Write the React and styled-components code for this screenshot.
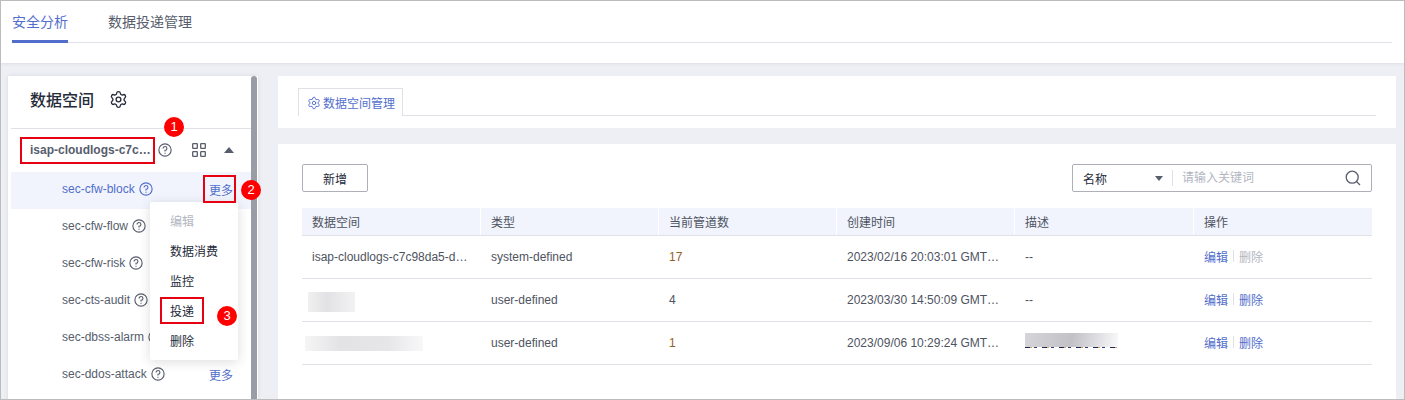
import React from "react";
import styled, { createGlobalStyle } from "styled-components";
import { Settings } from "lucide-react";

const FONT = `"Liberation Sans", "Noto Sans CJK SC", sans-serif`;
const BLUE = "#526ecc";
const TEXT = "#575d6c";

const GlobalStyle = createGlobalStyle`
  html, body { margin: 0; padding: 0; background: #eeeff4; }
  body { font-family: ${FONT}; font-size: 12px; color: ${TEXT}; }
  * { box-sizing: border-box; }
`;

const Page = styled.div`
  position: relative;
  width: 1405px;
  height: 400px;
  overflow: hidden;
  background: #eeeff4;
  border: 1px solid #bcbcbc;
`;

const TopBar = styled.div`
  height: 62px;
  background: #fff;
  padding: 0 12px 0 11px;
  box-shadow: 0 1px 3px rgba(37, 43, 58, 0.08);
`;

const TopTabs = styled.div`
  display: flex;
  height: 42px;
  gap: 40px;
  border-bottom: 1px solid #dfe1e6;
`;

const TopTab = styled.div`
  height: 42px;
  padding-top: 13px;
  line-height: 17px;
  font-size: 14px;
  color: ${(p) => (p.$active ? BLUE : TEXT)};
  border-bottom: 3px solid ${(p) => (p.$active ? BLUE : "transparent")};
`;

const Body = styled.div`
  display: flex;
  gap: 20px;
  padding: 13px 8px 0 7px;
`;

const Side = styled.aside`
  position: relative;
  flex: 0 0 250px;
  height: 330px;
  background: #fff;
  padding: 0 7px 0 3px;
  box-shadow: 0 0 4px rgba(37, 43, 58, 0.1);
`;

const ScrollThumb = styled.div`
  position: absolute;
  right: 1px;
  top: 0;
  width: 6px;
  height: 330px;
  border-radius: 3px 3px 0 0;
  background: #9a9ca6;
`;

const SideTitle = styled.div`
  display: flex;
  align-items: center;
  gap: 15px;
  height: 53px;
  padding: 0 0 6px 19px;
  border-bottom: 1px solid #dfe1e6;
  font-size: 16px;
  font-weight: 500;
  color: #252b3a;
`;

const Group = styled.div`
  display: flex;
  align-items: center;
  height: 43px;
  padding: 0 0 2px 19px;
  font-weight: 700;
  color: ${TEXT};
`;

const GroupName = styled.span`
  width: 125px;
  white-space: nowrap;
`;

const GroupIcons = styled.span`
  display: flex;
  align-items: center;
  color: ${TEXT};
  margin-left: 3px;
`;

const SubRow = styled.div`
  display: flex;
  align-items: center;
  height: 37px;
  padding: 0 0 3px 51px;
  color: ${(p) => (p.$active ? BLUE : TEXT)};
  background: ${(p) => (p.$active ? "#f1f4fc" : "transparent")};
  gap: 4px;
  white-space: nowrap;
`;

const More = styled.span`
  margin-left: auto;
  margin-right: 18px;
  color: ${BLUE};
`;

const Menu = styled.div`
  position: absolute;
  left: 142px;
  top: 126px;
  width: 88px;
  height: 158px;
  background: #fff;
  border-radius: 2px;
  box-shadow: 0 2px 12px rgba(37, 43, 58, 0.16);
  padding: 5px 0;
  z-index: 2;
`;

const MenuItem = styled.div`
  height: 30px;
  line-height: 30px;
  padding-left: 20px;
  color: ${(p) => (p.$disabled ? "#b3b6bf" : "#252b3a")};
`;

const Main = styled.main`
  flex: 1;
  display: flex;
  flex-direction: column;
  gap: 16px;
`;

const Panel = styled.section`
  background: #fff;
  padding: ${(p) => p.$pad};
  height: ${(p) => p.$h}px;
`;

const PanelTabs = styled.div`
  display: flex;
  height: 28px;
  border-bottom: 1px solid #dfe1e6;
`;

const PanelTab = styled.div`
  display: flex;
  align-items: center;
  gap: 2px;
  height: 28px;
  padding: 0 7px 0 8px;
  color: ${BLUE};
  background: #fff;
  border: 1px solid #dfe1e6;
  border-bottom: 0;
`;

const Toolbar = styled.div`
  display: flex;
  justify-content: space-between;
  height: 28px;
  margin-bottom: 16px;
`;

const AddButton = styled.button`
  width: 66px;
  height: 28px;
  padding: 0;
  font: inherit;
  color: #252b3a;
  background: #fff;
  border: 1px solid #adb0b8;
  border-radius: 2px;
`;

const Search = styled.div`
  display: flex;
  align-items: center;
  width: 300px;
  height: 28px;
  border: 1px solid #adb0b8;
  border-radius: 2px;
  padding: 0 10px;
  color: #252b3a;
`;

const SearchType = styled.span`
  flex: 1;
`;

const Caret = styled.i`
  width: 0;
  height: 0;
  margin-right: 9px;
  border-left: 4px solid transparent;
  border-right: 4px solid transparent;
  border-top: 5px solid ${TEXT};
`;

const SearchInput = styled.span`
  flex: 0 0 173px;
  color: #b3b6bf;
  line-height: 16px;
  padding-left: 9px;
  border-left: 1px solid #dfe1e6;
`;

const Table = styled.div`
  width: 1070px;
`;

const Row = styled.div`
  display: grid;
  grid-template-columns: 179px 178px 178px 178px 179px 178px;
  height: ${(p) => (p.$head ? 28 : 43)}px;
  align-items: center;
  border-bottom: 1px solid #dfe1e6;
  background: ${(p) => (p.$head ? "#f1f4fc" : "#fff")};
`;

const Cell = styled.div`
  height: 100%;
  display: flex;
  align-items: center;
  padding: 0 10px;
  white-space: nowrap;
  overflow: hidden;
  color: ${(p) => (p.$warn ? "#96601f" : "#4e5361")};
  border-right: ${(p) => (p.$head ? "1px solid #fff" : "0")};
  &:last-child { border-right: 0; }
`;

const ActionCell = styled(Cell)`
  padding-bottom: 2px;
`;

const Blur = styled.span`
  display: block;
  width: ${(p) => p.$w}px;
  height: ${(p) => p.$h}px;
  margin: ${(p) => p.$y}px 0 0 ${(p) => p.$x}px;
  background: ${(p) => p.$bg};
`;

const BlurredDesc = styled.span`
  display: block;
  width: 93px;
  height: 15px;
  margin-bottom: 5px;
  background:
    repeating-linear-gradient(90deg, #1d2a55 0 5px, #d8a566 5px 7px, #fff 7px 9px, #27407a 9px 12px, #fff 12px 17px) left bottom / 100% 1px no-repeat,
    linear-gradient(100deg, #d6d6da, #c1c1c6 50%, #f9f9fb) top / 100% 14px no-repeat;
`;

const ActionLink = styled.span`
  color: ${(p) => (p.$disabled ? "#b3b6bf" : BLUE)};
`;

const Divider = styled.span`
  width: 1px;
  height: 12px;
  margin: 0 5px;
  background: #dfe1e6;
`;

const Mark = styled.div`
  position: absolute;
  left: ${(p) => p.$x}px;
  top: ${(p) => p.$y}px;
  width: ${(p) => p.$w}px;
  height: ${(p) => p.$h}px;
  border: 2px solid #e60012;
  z-index: 3;
`;

const Badge = styled.div`
  position: absolute;
  left: ${(p) => p.$x}px;
  top: ${(p) => p.$y}px;
  width: 20px;
  height: 20px;
  line-height: 20px;
  text-align: center;
  border-radius: 50%;
  background: #f00;
  color: #fff;
  font-size: 13px;
  z-index: 3;
`;

const Help = ({ size = 14 }) => (
  <svg width={size} height={size} viewBox="0 0 16 16" fill="none" stroke="currentColor" strokeWidth="1.3" style={{ flex: "none" }}>
    <circle cx="8" cy="8" r="7" />
    <path d="M5.8 6.2A2.2 2.2 0 1 1 8 8.4v1.3" />
    <path d="M8 11v1.2" />
  </svg>
);

const Grid = () => (
  <svg width="14" height="14" viewBox="0 0 14 14" fill="none" stroke="currentColor" strokeWidth="1.3" style={{ marginLeft: 20 }}>
    <rect x="0.7" y="0.7" width="4.6" height="4.6" rx="0.6" />
    <rect x="8.7" y="0.7" width="4.6" height="4.6" rx="0.6" />
    <rect x="0.7" y="8.7" width="4.6" height="4.6" rx="0.6" />
    <rect x="8.7" y="8.7" width="4.6" height="4.6" rx="0.6" />
  </svg>
);

const Up = () => (
  <svg width="10" height="6" viewBox="0 0 10 6" fill="currentColor" style={{ marginLeft: 18 }}>
    <path d="M5 0l5 6H0z" />
  </svg>
);

const SearchIcon = () => (
  <svg width="16" height="16" viewBox="0 0 16 16" fill="none" stroke="#575d6c" strokeWidth="1.3" style={{ marginLeft: "auto" }}>
    <circle cx="7.2" cy="7.2" r="6" />
    <path d="M11.5 11.5L15 15" />
  </svg>
);

const SPACES = ["sec-cfw-flow", "sec-cfw-risk", "sec-cts-audit", "sec-dbss-alarm", "sec-ddos-attack"];

const ROWS = [
  { name: "isap-cloudlogs-c7c98da5-d…", type: "system-defined", count: "17", warn: true, time: "2023/02/16 20:03:01 GMT…", desc: "--", locked: true },
  { blur: { w: 47, h: 20, x: -4, y: 4, bg: "linear-gradient(90deg, #f0f0f1, #e2e2e4 40%, #f2f2f3)" }, type: "user-defined", count: "4", time: "2023/03/30 14:50:09 GMT…", desc: "--" },
  { blur: { w: 118, h: 15, x: -7, y: 0, bg: "linear-gradient(90deg, #f5f5f6, #e3e3e5 30%, #e6e6e8 70%, #f8f8f9)" }, type: "user-defined", count: "1", warn: true, time: "2023/09/06 10:29:24 GMT…", descBlur: true },
];

export default function App() {
  return (
    <Page>
      <GlobalStyle />
      <TopBar>
        <TopTabs>
          <TopTab $active>安全分析</TopTab>
          <TopTab>数据投递管理</TopTab>
        </TopTabs>
      </TopBar>
      <Body>
        <Side>
          <SideTitle>
            数据空间
            <Settings size={19} strokeWidth={1.7} />
          </SideTitle>
          <Group>
            <GroupName>isap-cloudlogs-c7c…</GroupName>
            <GroupIcons>
              <Help />
              <Grid />
              <Up />
            </GroupIcons>
          </Group>
          <SubRow $active>
            sec-cfw-block <Help />
            <More>更多</More>
          </SubRow>
          {SPACES.map((name, i) => (
            <SubRow key={name}>
              {name} <Help />
              {i === 4 && <More>更多</More>}
            </SubRow>
          ))}
          <Menu>
            <MenuItem $disabled>编辑</MenuItem>
            <MenuItem>数据消费</MenuItem>
            <MenuItem>监控</MenuItem>
            <MenuItem>投递</MenuItem>
            <MenuItem>删除</MenuItem>
          </Menu>
          <ScrollThumb />
        </Side>
        <Main>
          <Panel $h={52} $pad="12px 20px 0">
            <PanelTabs>
              <PanelTab>
                <Settings size={14} strokeWidth={1.6} />
                数据空间管理
              </PanelTab>
            </PanelTabs>
          </Panel>
          <Panel $h={262} $pad="20px 24px 0">
            <Toolbar>
              <AddButton>新增</AddButton>
              <Search>
                <SearchType>名称</SearchType>
                <Caret />
                <SearchInput>请输入关键词</SearchInput>
                <SearchIcon />
              </Search>
            </Toolbar>
            <Table>
              <Row $head>
                {["数据空间", "类型", "当前管道数", "创建时间", "描述", "操作"].map((h) => (
                  <Cell $head key={h}>{h}</Cell>
                ))}
              </Row>
              {ROWS.map((r) => (
                <Row key={r.time}>
                  <Cell>{r.blur ? <Blur $w={r.blur.w} $h={r.blur.h} $x={r.blur.x} $y={r.blur.y} $bg={r.blur.bg} /> : r.name}</Cell>
                  <Cell>{r.type}</Cell>
                  <Cell $warn={r.warn}>{r.count}</Cell>
                  <Cell>{r.time}</Cell>
                  <Cell>{r.descBlur ? <BlurredDesc /> : r.desc}</Cell>
                  <ActionCell>
                    <ActionLink>编辑</ActionLink>
                    <Divider />
                    <ActionLink $disabled={r.locked}>删除</ActionLink>
                  </ActionCell>
                </Row>
              ))}
            </Table>
          </Panel>
        </Main>
      </Body>
      <Mark $x={19} $y={136} $w={135} $h={27} />
      <Mark $x={202} $y={174} $w={33} $h={28} />
      <Mark $x={159} $y={296} $w={44} $h={27} />
      <Badge $x={163} $y={116}>1</Badge>
      <Badge $x={240} $y={179}>2</Badge>
      <Badge $x={216} $y={305}>3</Badge>
    </Page>
  );
}
